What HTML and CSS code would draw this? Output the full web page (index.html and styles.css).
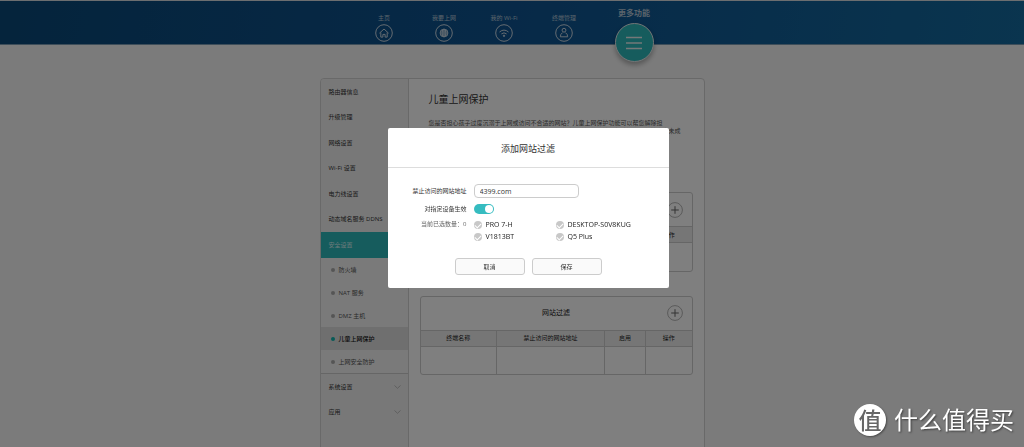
FILE: index.html
```html
<!DOCTYPE html>
<html lang="zh-CN">
<head>
<meta charset="utf-8">
<title>儿童上网保护</title>
<link rel="stylesheet" href="styles.css">
</head>
<body>
<header class="topbar">
  <nav class="nav">
    <a class="nav-item" href="#"><span>主页</span>
      <svg class="nav-icon" viewBox="0 0 18 18"><circle cx="9" cy="9" r="8.3"/><path d="M4.4 9.2 9 5l4.6 4.2M5.8 8.5v4.6h2.1v-2.7h2.2v2.7h2.1V8.5"/></svg></a>
    <a class="nav-item" href="#"><span>我要上网</span>
      <svg class="nav-icon" viewBox="0 0 18 18"><circle cx="9" cy="9" r="8.3"/><circle cx="9" cy="9" r="3.9"/><ellipse cx="9" cy="9" rx="1.9" ry="3.9"/><path d="M5.1 9h7.8M9 5.1v7.8M5.7 7h6.6M5.7 11h6.6"/></svg></a>
    <a class="nav-item" href="#"><span>我的 Wi-Fi</span>
      <svg class="nav-icon" viewBox="0 0 18 18"><circle cx="9" cy="9" r="8.3"/><path d="M4.5 8q4.5-3.8 9 0M6.4 9.9q2.6-2.1 5.2 0"/><circle class="solid" cx="9" cy="11.8" r=".7"/></svg></a>
    <a class="nav-item" href="#"><span>终端管理</span>
      <svg class="nav-icon" viewBox="0 0 18 18"><circle cx="9" cy="9" r="8.3"/><circle cx="9" cy="6.2" r="1.9"/><path d="M7.6 8.6Q5.3 10 5.3 12.8h7.4Q12.7 10 10.4 8.6"/></svg></a>
    <a class="nav-item nav-more" href="#"><span>更多功能</span>
      <span class="more-disc"><svg class="more-icon" viewBox="0 0 16 14"><path d="M0 1.5h16M0 7h16M0 12.5h16"/></svg></span></a>
  </nav>
</header>

<div class="card">
  <aside class="side">
    <div class="side-group">
      <a href="#">路由器信息</a>
      <a href="#">升级管理</a>
      <a href="#">网络设置</a>
      <a href="#">Wi-Fi 设置</a>
      <a href="#">电力线设置</a>
      <a href="#">动态域名服务 DDNS</a>
    </div>
    <a class="side-active" href="#">安全设置</a>
    <div class="side-sub">
      <a href="#">防火墙</a>
      <a href="#">NAT 服务</a>
      <a href="#">DMZ 主机</a>
      <a class="current" href="#">儿童上网保护</a>
      <a href="#">上网安全防护</a>
    </div>
    <a class="side-fold" href="#">系统设置<svg viewBox="0 0 7 4"><path d="M.5.5l3 2.8 3-2.8"/></svg></a>
    <a class="side-fold" href="#">应用<svg viewBox="0 0 7 4"><path d="M.5.5l3 2.8 3-2.8"/></svg></a>
  </aside>
  <main class="main">
    <h1>儿童上网保护</h1>
    <p class="intro">您是否担心孩子过度沉溺于上网或访问不合适的网站？儿童上网保护功能可以帮您解除担<br>忧，您可以限制孩子的终端上网时间，并过滤不适合孩子访问的网站，帮助管理和保护家中未成</p>
    <section class="panel">
      <div class="panel-head"><h2>时间限制</h2><button class="add" type="button" aria-label="添加时间限制"><svg viewBox="0 0 16 16"><circle cx="8" cy="8" r="7.4"/><path class="plus" d="M8 4.2v7.6M4.2 8h7.6"/></svg></button></div>
      <table>
        <colgroup><col class="c-name"><col class="c-site"><col class="c-on"><col class="c-act"></colgroup>
        <thead><tr><th>终端名称</th><th>时间</th><th>启用</th><th>操作</th></tr></thead>
        <tbody><tr><td></td><td></td><td></td><td></td></tr></tbody>
      </table>
    </section>
    <section class="panel">
      <div class="panel-head"><h2>网站过滤</h2><button class="add" type="button" aria-label="添加网站过滤"><svg viewBox="0 0 16 16"><circle cx="8" cy="8" r="7.4"/><path class="plus" d="M8 4.2v7.6M4.2 8h7.6"/></svg></button></div>
      <table>
        <colgroup><col class="c-name"><col class="c-site"><col class="c-on"><col class="c-act"></colgroup>
        <thead><tr><th>终端名称</th><th>禁止访问的网站地址</th><th>启用</th><th>操作</th></tr></thead>
        <tbody><tr><td></td><td></td><td></td><td></td></tr></tbody>
      </table>
    </section>
  </main>
</div>

<div class="overlay">
  <form class="dialog" role="dialog" aria-labelledby="dialog-title">
    <h2 class="dialog-title" id="dialog-title">添加网站过滤</h2>
    <div class="fields">
      <label class="field-label" for="site">禁止访问的网站地址</label>
      <input class="text" id="site" type="text" value="4399.com">
      <label class="field-label" for="scope">对指定设备生效</label>
      <input class="switch" id="scope" type="checkbox" checked>
      <span class="field-label count">当前已选数量：0</span>
      <div class="devices">
        <label><input type="checkbox">PRO 7-H</label>
        <label><input type="checkbox">DESKTOP-S0V8KUG</label>
        <label><input type="checkbox">V1813BT</label>
        <label><input type="checkbox">Q5 Plus</label>
      </div>
    </div>
    <div class="actions">
      <button type="button">取消</button>
      <button type="button">保存</button>
    </div>
  </form>
</div>

<div class="brand"><span class="brand-disc">值</span><span>什么值得买</span></div>
</body>
</html>
```
FILE: styles.css
```css
* { box-sizing: border-box; }

body {
  margin: 0;
  min-height: 100vh;
  overflow: hidden;
  background: #f7f7f7;
  color: #333;
  font: 6px/8px "Open Sans", "Noto Sans CJK SC", sans-serif;
}

a { color: inherit; text-decoration: none; }
h1, h2, p { margin: 0; font-weight: 400; }
button, input { margin: 0; padding: 0; font: inherit; color: inherit; }
svg { display: block; fill: none; }

/* Top navigation */
.topbar {
  height: 45px;
  border-top: 1px solid #d8dde0;
  border-bottom: 1px solid #7d9db5;
  background: linear-gradient(100deg, #0a4878, #0e5390 50%, #146a9e);
}
.nav {
  display: flex;
  justify-content: center;
  padding-left: 4px;
  color: #b4c6d6;
}
.nav-item {
  display: flex;
  flex-direction: column;
  align-items: center;
  gap: 2px;
  width: 60px;
  padding-top: 13px;
}
.nav-icon { width: 18px; height: 18px; stroke: #c8d6e2; }
.nav-icon .solid { fill: #c8d6e2; }
.nav-more {
  width: 80px;
  padding-top: 6px;
  gap: 4px;
  font-size: 8px;
  line-height: 12px;
  font-weight: 600;
}
.more-disc {
  display: flex;
  align-items: center;
  justify-content: center;
  width: 39px;
  height: 39px;
  flex: none;
  border: 1px solid #e4eaec;
  border-radius: 50%;
  background: #2cb8bb;
  box-shadow: 0 3px 5px rgba(0, 0, 0, .3);
}
.more-icon { width: 16px; height: 14px; stroke: #e8f0f0; stroke-width: 1.4; }

/* Settings card */
.card {
  display: flex;
  width: 385px;
  max-width: 100%;
  min-height: calc(100vh - 70px);
  margin: 33px auto 0;
  border: 1px solid #d2d2d2;
  border-radius: 4px;
  background: #fff;
}
.side {
  width: 88px;
  flex: none;
  border-right: 1px solid #d2d2d2;
  border-radius: 4px 0 0 4px;
  background: #f0f0f0;
  white-space: nowrap;
  color: #333;
}
.side-group { display: grid; grid-auto-rows: 1fr; min-height: 153px; }
.side-group a { display: flex; align-items: center; padding-left: 8px; }
.side-active {
  display: flex;
  align-items: center;
  height: 26px;
  padding-left: 8px;
  background: #2cb8bb;
  color: #dcf5f5;
}
.side-sub { border-bottom: 1px solid #ccc; background: #f4f4f4; color: #555; }
.side-sub a { display: flex; align-items: center; gap: 4px; height: 23px; padding-left: 10px; }
.side-sub a::before { content: ""; width: 4px; height: 4px; border-radius: 50%; background: #aaa; }
.side-sub .current { background: #dedede; color: #111; font-weight: 500; }
.side-sub .current::before { background: #0fb5ae; }
.side-fold {
  display: flex;
  align-items: center;
  justify-content: space-between;
  height: 25px;
  padding: 0 7px 0 8px;
}
.side-fold svg { width: 7px; height: 4px; stroke: #aaa; stroke-width: .7; }

.main { flex: 1; min-width: 0; padding: 13px 11px 0; }
.main h1 { padding-left: 9px; font-size: 10px; line-height: 15px; }
.intro { height: 73px; margin-top: 12px; padding-left: 9px; white-space: nowrap; color: #555; }
.panel {
  margin-bottom: 24px;
  border: 1px solid #ccc;
  border-radius: 3px;
  overflow: hidden;
}
.panel-head {
  display: grid;
  grid-template-columns: 1fr auto 1fr;
  align-items: center;
  height: 33px;
}
.panel-head h2 { grid-column: 2; font-size: 7px; color: #111; }
.add { justify-self: end; width: 16px; height: 16px; margin-right: 9px; border: 0; background: none; }
.add svg { width: 16px; height: 16px; stroke: #b4b4b4; }
.add .plus { stroke: #666; }
table { width: 100%; border-collapse: collapse; table-layout: fixed; }
.c-name { width: 28%; }
.c-site { width: 40%; }
.c-on { width: 15%; }
.c-act { width: 17%; }
th { height: 16px; padding: 0; border: 1px solid #ccc; background: #ededed; font-weight: 400; color: #222; }
td { height: 28px; padding: 0; border: 1px solid #ccc; }
th:first-child, td:first-child { border-left: 0; }
th:last-child, td:last-child { border-right: 0; }
td { border-bottom: 0; }

/* Dialog */
.overlay {
  position: fixed;
  inset: 0;
  display: flex;
  align-items: flex-start;
  justify-content: center;
  padding: 128px 0 0 32px;
  background: rgba(0, 0, 0, .5);
}
.dialog { width: 281px; border-radius: 2px; background: #fff; color: #333; }
.dialog-title {
  padding: 13px 0 11px;
  border-bottom: 1px solid #ddd;
  font-size: 9px;
  line-height: 15px;
  text-align: center;
}
.fields {
  display: grid;
  grid-template-columns: 79px 1fr;
  column-gap: 7px;
  row-gap: 6px;
  padding-top: 16px;
}
.field-label { align-self: center; text-align: right; white-space: nowrap; }
.count { align-self: start; color: #666; }
.text {
  width: 105px;
  height: 14px;
  padding: 0 5px;
  border: 1px solid #ccc;
  border-radius: 4px;
  background: #fff;
  font-size: 7px;
}
.switch {
  appearance: none;
  display: flex;
  justify-content: flex-end;
  width: 20px;
  height: 10px;
  padding: 1px;
  border-radius: 5px;
  background: #36bcc0;
}
.switch::before { content: ""; width: 8px; height: 8px; border-radius: 50%; background: #fff; }
.devices {
  display: grid;
  grid-template-columns: 82px 1fr;
  row-gap: 2px;
  font-size: 7px;
  line-height: 10px;
  color: #222;
}
.devices label { display: flex; align-items: center; gap: 4px; white-space: nowrap; }
.devices input {
  appearance: none;
  display: flex;
  align-items: center;
  justify-content: center;
  width: 8px;
  height: 8px;
  border-radius: 50%;
  background: #c8c8c8;
}
.devices input::before {
  content: "";
  width: 5px;
  height: 3px;
  border: solid #fff;
  border-width: 0 0 1px 1px;
  transform: rotate(-45deg);
}
.actions { display: flex; justify-content: center; gap: 7px; padding: 16px 0 13px; }
.actions button {
  width: 70px;
  height: 17px;
  border: 1px solid #ccc;
  border-radius: 3px;
  background: #fafafa;
}

/* Site mark */
.brand {
  position: fixed;
  right: 10px;
  bottom: 11px;
  display: flex;
  align-items: center;
  gap: 8px;
  color: #fff;
  font-size: 24px;
  line-height: 32px;
  text-shadow: 1px 1px 2px rgba(0, 0, 0, .5);
}
.brand-disc {
  width: 32px;
  height: 32px;
  border-radius: 50%;
  background: #fff;
  box-shadow: 1px 1px 2px rgba(0, 0, 0, .4);
  color: #666;
  font-size: 23px;
  line-height: 32px;
  font-weight: 500;
  text-align: center;
  text-shadow: none;
}
```
